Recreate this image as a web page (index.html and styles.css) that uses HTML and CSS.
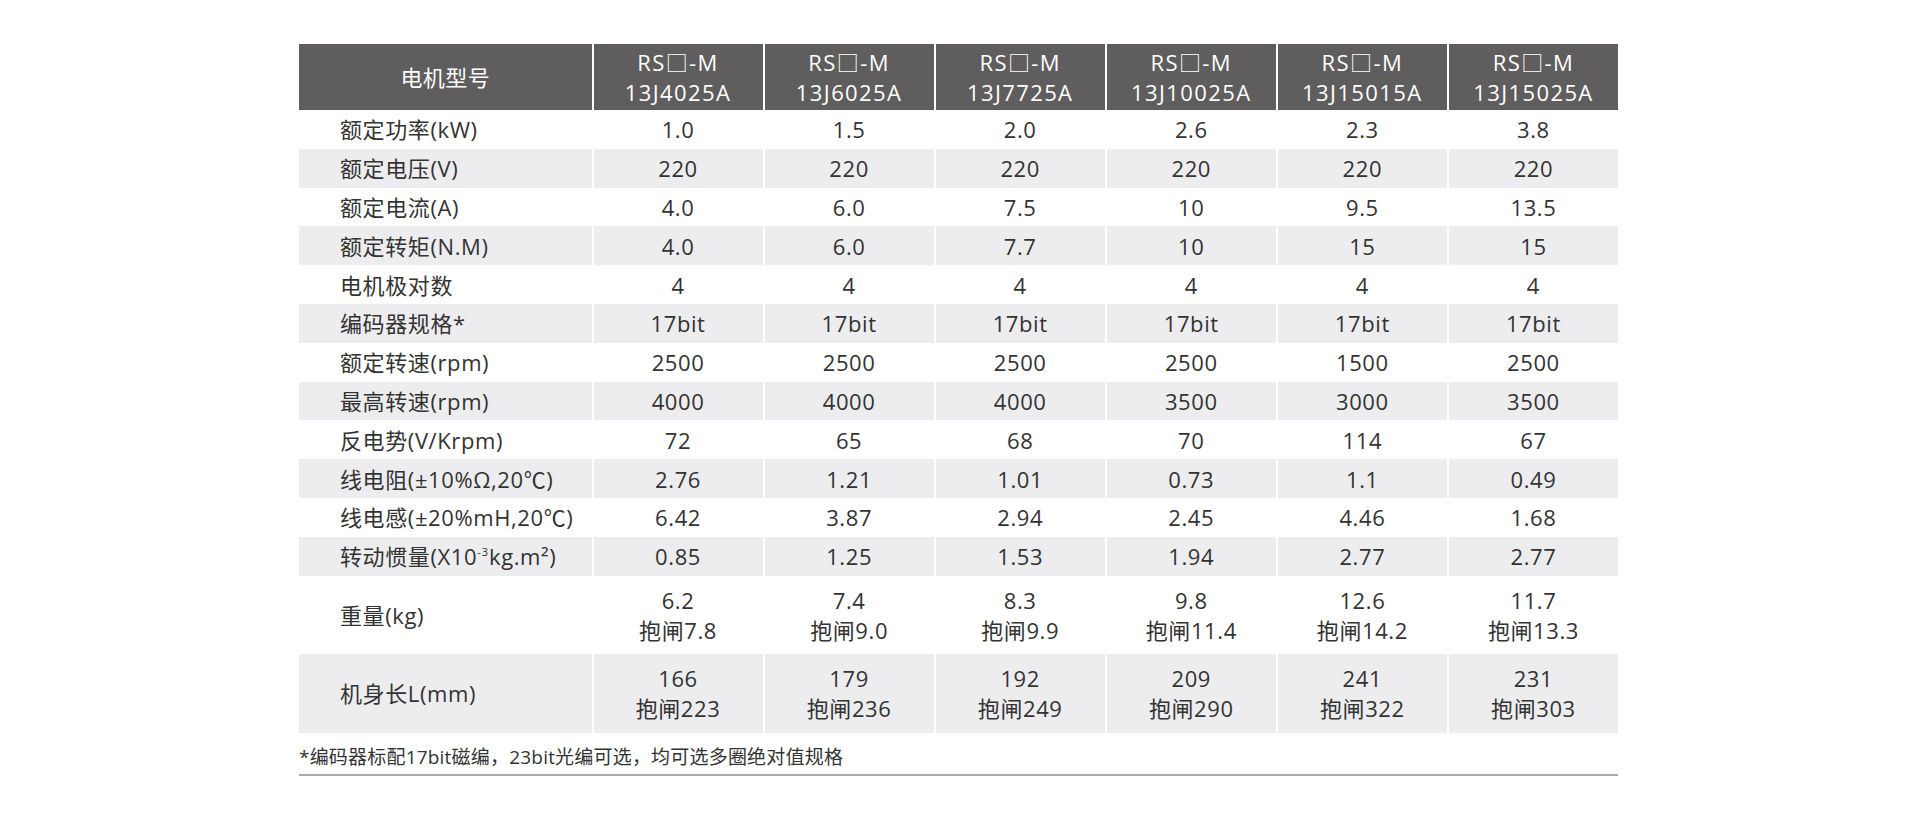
FILE: index.html
```html
<!DOCTYPE html>
<html lang="zh-CN">
<head>
<meta charset="utf-8">
<title>电机参数</title>
<link rel="stylesheet" href="styles.css">
</head>
<body>
<div class="wrap">
  <table class="spec">
    <colgroup>
      <col class="c-label">
      <col><col><col><col><col><col>
    </colgroup>
    <thead>
      <tr class="head">
        <th>电机型号</th>
        <th>RS□-M<br>13J4025A</th>
        <th>RS□-M<br>13J6025A</th>
        <th>RS□-M<br>13J7725A</th>
        <th>RS□-M<br>13J10025A</th>
        <th>RS□-M<br>13J15015A</th>
        <th>RS□-M<br>13J15025A</th>
      </tr>
    </thead>
    <tbody>
      <tr><td>额定功率(kW)</td><td>1.0</td><td>1.5</td><td>2.0</td><td>2.6</td><td>2.3</td><td>3.8</td></tr>
      <tr class="alt"><td>额定电压(V)</td><td>220</td><td>220</td><td>220</td><td>220</td><td>220</td><td>220</td></tr>
      <tr><td>额定电流(A)</td><td>4.0</td><td>6.0</td><td>7.5</td><td>10</td><td>9.5</td><td>13.5</td></tr>
      <tr class="alt"><td>额定转矩(N.M)</td><td>4.0</td><td>6.0</td><td>7.7</td><td>10</td><td>15</td><td>15</td></tr>
      <tr><td>电机极对数</td><td>4</td><td>4</td><td>4</td><td>4</td><td>4</td><td>4</td></tr>
      <tr class="alt"><td>编码器规格*</td><td>17bit</td><td>17bit</td><td>17bit</td><td>17bit</td><td>17bit</td><td>17bit</td></tr>
      <tr><td>额定转速(rpm)</td><td>2500</td><td>2500</td><td>2500</td><td>2500</td><td>1500</td><td>2500</td></tr>
      <tr class="alt"><td>最高转速(rpm)</td><td>4000</td><td>4000</td><td>4000</td><td>3500</td><td>3000</td><td>3500</td></tr>
      <tr><td>反电势(V/Krpm)</td><td>72</td><td>65</td><td>68</td><td>70</td><td>114</td><td>67</td></tr>
      <tr class="alt"><td>线电阻(±10%Ω,20℃)</td><td>2.76</td><td>1.21</td><td>1.01</td><td>0.73</td><td>1.1</td><td>0.49</td></tr>
      <tr><td>线电感(±20%mH,20℃)</td><td>6.42</td><td>3.87</td><td>2.94</td><td>2.45</td><td>4.46</td><td>1.68</td></tr>
      <tr class="alt"><td>转动惯量(X10<sup>-3</sup>kg.m²)</td><td>0.85</td><td>1.25</td><td>1.53</td><td>1.94</td><td>2.77</td><td>2.77</td></tr>
      <tr class="double"><td>重量(kg)</td><td>6.2<br>抱闸7.8</td><td>7.4<br>抱闸9.0</td><td>8.3<br>抱闸9.9</td><td>9.8<br>抱闸11.4</td><td>12.6<br>抱闸14.2</td><td>11.7<br>抱闸13.3</td></tr>
      <tr class="double alt"><td>机身长L(mm)</td><td>166<br>抱闸223</td><td>179<br>抱闸236</td><td>192<br>抱闸249</td><td>209<br>抱闸290</td><td>241<br>抱闸322</td><td>231<br>抱闸303</td></tr>
    </tbody>
  </table>
  <p class="note">*编码器标配17bit磁编，23bit光编可选，均可选多圈绝对值规格</p>
</div>
</body>
</html>
```

FILE: styles.css
```css
html, body {
  margin: 0;
  padding: 0;
  background: #ffffff;
}

body {
  font-family: "Open Sans", "Noto Sans CJK SC", sans-serif;
  color: #333333;
}

.wrap {
  width: 1319px;
  margin-left: 299px;
  padding-top: 44px;
}

.spec {
  width: 1319px;
  table-layout: fixed;
  border-collapse: separate;
  border-spacing: 0;
  font-size: 22px;
}

.c-label {
  width: 292.5px;
}

.spec th,
.spec td {
  padding: 0;
  text-align: center;
  vertical-align: middle;
  font-weight: 400;
  line-height: 30px;
  letter-spacing: 0.6px;
}

.spec th + th,
.spec td + td {
  border-left: 2px solid #ffffff;
}

.head th {
  height: 66px;
  background: #5f5d5e;
  color: #ffffff;
  letter-spacing: 1.4px;
}

.head th:first-child {
  letter-spacing: 0.4px;
}

.spec tbody tr {
  height: 38.8px;
}

.spec tbody tr.double {
  height: 78.5px;
}

.spec tbody tr.alt td {
  background: #ededef;
}

.spec tbody td:first-child {
  text-align: left;
  padding-left: 41px;
  white-space: nowrap;
}

.spec sup {
  font-size: 11px;
  line-height: 0;
  vertical-align: 9px;
  letter-spacing: 1px;
}

.note {
  margin: 0;
  padding: 12px 0 5px;
  font-size: 19px;
  line-height: 24px;
  letter-spacing: 0.2px;
  color: #333333;
  border-bottom: 2px solid #aaaaaa;
}
```
